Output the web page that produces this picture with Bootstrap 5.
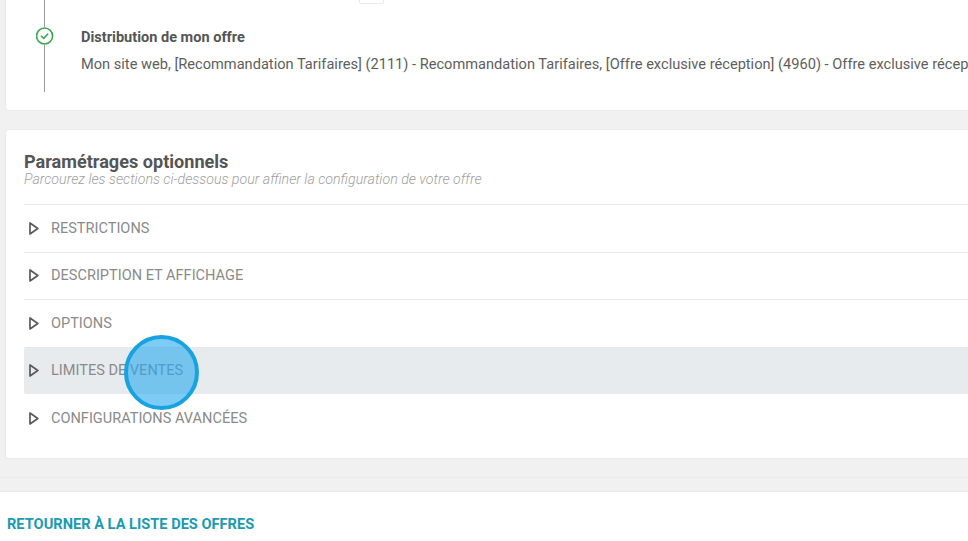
<!DOCTYPE html>
<html lang="fr">
<head>
<meta charset="utf-8">
<title>Paramétrages optionnels</title>
<link href="https://cdn.jsdelivr.net/npm/bootstrap@5.3.0/dist/css/bootstrap.min.css" rel="stylesheet">
<style>
html,body{height:541px;overflow:hidden}
body{background:#f1f1f1;font-family:Roboto,sans-serif;color:#555;font-size:14.5px;position:relative}
.panel-a,.panel-b{margin-left:6px;background:#fff;box-shadow:0 0 2px rgba(0,0,0,.1)}
.panel-a{height:110px;display:flex;border-radius:0 0 0 3px}
.rail{width:75px;display:flex;flex-direction:column;align-items:center;flex:none;padding-left:2px}
.rail-line{width:1px;background:#9a9a9a}
.rail-top{height:27px}
.rail-bottom{height:47px}
.rail-icon{width:18px;height:18px;display:block}
.step-body{padding-top:29px;white-space:nowrap;overflow:hidden;min-width:0;flex:1}
.step-title{font-weight:700;font-size:14.55px;line-height:18px;color:#555;margin-bottom:8px}
.step-text{font-size:14.62px;line-height:19px;color:#5e5e5e}
.tiny-box{position:absolute;left:359px;top:-20px;width:25px;height:24px;background:#fff;border:1px solid #e9e9e9;border-radius:2px}
.panel-b{margin-top:20px;height:328px;padding:23px 0 0 18px;border-radius:3px 0 0 3px}
.panel-title{font-size:18.1px;font-weight:700;line-height:18px;color:#555;margin:0}
.panel-sub{font-size:14.2px;font-style:italic;font-weight:300;color:#a0a0a0;line-height:16px;margin-top:0;margin-bottom:17px}
.opt-row{height:47.5px;border-top:1px solid #e9e9e9;display:flex;align-items:center;color:#8a8a8a;font-size:14.55px;padding-left:5px;gap:12px}
.opt-row span{padding-top:1px}
.opt-row.is-hot{background:#e8ebed;border-top-color:#e5e7e9;border-radius:2px 0 0 2px}
.opt-row.no-line{border-top-color:transparent}
.opt-arrow{width:10px;height:13px;flex:none}
.foot-bar{margin-top:33px;height:60px;background:#fff;border-top:1px solid #ebebeb;padding:24px 0 0 7px}
.foot-link{font-weight:700;font-size:14.62px;line-height:17px;color:#1c9ab1;text-decoration:none;display:block}
.rule-soft{height:1px;background:#ebebeb;position:absolute;left:0;right:0;top:477px}
.tap-mark{position:absolute;left:124px;top:335px;width:75px;height:75px;border-radius:50%;background:rgba(40,170,238,.6);border:4px solid #18a2e0}
</style>
</head>
<body>
<div class="tiny-box"></div>
<div class="panel-a">
  <div class="rail">
    <div class="rail-line rail-top"></div>
    <svg class="rail-icon" viewBox="0 0 18 18" fill="none" stroke="#3fa652" stroke-width="1.6"><circle cx="8.6" cy="9" r="8"/><path d="M5.4 9.2l2.2 2.2 4.2-4.4" stroke-linecap="round" stroke-linejoin="round"/></svg>
    <div class="rail-line rail-bottom"></div>
  </div>
  <div class="step-body">
    <div class="step-title">Distribution de mon offre</div>
    <div class="step-text">Mon site web, [Recommandation Tarifaires] (2111) - Recommandation Tarifaires, [Offre exclusive réception] (4960) - Offre exclusive réception</div>
  </div>
</div>
<div class="panel-b">
  <h2 class="panel-title">Paramétrages optionnels</h2>
  <div class="panel-sub">Parcourez les sections ci-dessous pour affiner la configuration de votre offre</div>
  <div class="opt-row"><svg class="opt-arrow" viewBox="0 0 10 13" fill="none" stroke="#5a5a5a" stroke-width="1.7"><path d="M1 1v11l7.8-5.5z" stroke-linejoin="round"/></svg><span>RESTRICTIONS</span></div>
  <div class="opt-row"><svg class="opt-arrow" viewBox="0 0 10 13" fill="none" stroke="#5a5a5a" stroke-width="1.7"><path d="M1 1v11l7.8-5.5z" stroke-linejoin="round"/></svg><span>DESCRIPTION ET AFFICHAGE</span></div>
  <div class="opt-row"><svg class="opt-arrow" viewBox="0 0 10 13" fill="none" stroke="#5a5a5a" stroke-width="1.7"><path d="M1 1v11l7.8-5.5z" stroke-linejoin="round"/></svg><span>OPTIONS</span></div>
  <div class="opt-row is-hot"><svg class="opt-arrow" viewBox="0 0 10 13" fill="none" stroke="#5a5a5a" stroke-width="1.7"><path d="M1 1v11l7.8-5.5z" stroke-linejoin="round"/></svg><span>LIMITES DE VENTES</span></div>
  <div class="opt-row no-line"><svg class="opt-arrow" viewBox="0 0 10 13" fill="none" stroke="#5a5a5a" stroke-width="1.7"><path d="M1 1v11l7.8-5.5z" stroke-linejoin="round"/></svg><span>CONFIGURATIONS AVANCÉES</span></div>
</div>
<div class="rule-soft"></div>
<div class="foot-bar"><a class="foot-link" href="#">RETOURNER À LA LISTE DES OFFRES</a></div>
<div class="tap-mark"></div>
<script src="https://cdn.jsdelivr.net/npm/bootstrap@5.3.0/dist/js/bootstrap.bundle.min.js"></script>
</body>
</html>
